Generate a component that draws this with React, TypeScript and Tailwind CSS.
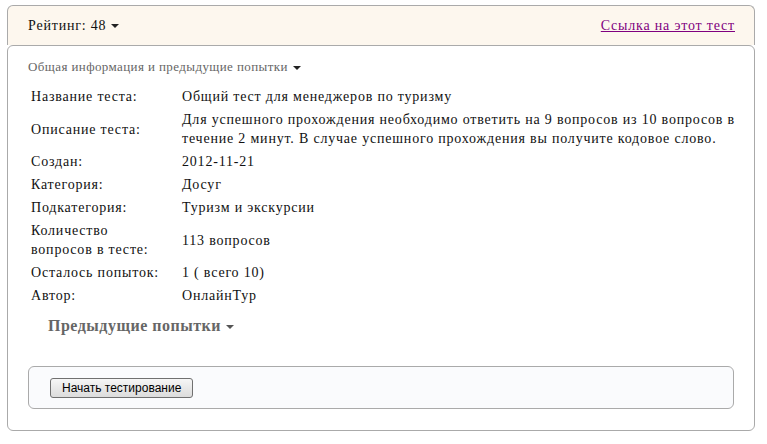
import React from 'react';

const rows: { label: React.ReactNode; value: string }[] = [
  { label: 'Название теста:', value: 'Общий тест для менеджеров по туризму' },
  {
    label: 'Описание теста:',
    value:
      'Для успешного прохождения необходимо ответить на 9 вопросов из 10 вопросов в течение 2 минут. В случае успешного прохождения вы получите кодовое слово.',
  },
  { label: 'Создан:', value: '2012-11-21' },
  { label: 'Категория:', value: 'Досуг' },
  { label: 'Подкатегория:', value: 'Туризм и экскурсии' },
  {
    label: (
      <>
        Количество
        <br />
        вопросов в тесте:
      </>
    ),
    value: '113 вопросов',
  },
  { label: 'Осталось попыток:', value: '1 ( всего 10)' },
  { label: 'Автор:', value: 'ОнлайнТур' },
];

const Caret = ({ color = 'border-t-[#222]' }: { color?: string }) => (
  <span className={`ml-[5px] inline-block h-0 w-0 border-x-[4px] border-t-[4px] border-x-transparent align-middle ${color}`} />
);

const App: React.FC = () => {
  return (
    <div className="min-h-[444px] bg-white pt-[5px] pl-[7px] pr-[12px] font-['Liberation_Serif',serif] text-[14px] tracking-[0.8px] text-[#111]">
      {/* Header */}
      <div className="flex h-[40px] items-center justify-between rounded-t-[6px] border border-b-0 border-[#aaaaaa] bg-[#fdf7ee] pl-[20px] pr-[19px]">
        <span className="leading-[18px]">
          Рейтинг: 48
          <Caret />
        </span>
        <a href="#" className="leading-[18px] text-[#800080] underline">
          Ссылка на этот тест
        </a>
      </div>

      {/* Body */}
      <div className="rounded-[6px] border border-[#aaaaaa] bg-white pb-[21px] pl-[20px] pr-[20px]">
        <div className="mt-[13px] text-[13px] leading-[16px] tracking-[0.4px] text-[#666]">
          Общая информация и предыдущие попытки
          <Caret />
        </div>

        <table className="mt-[9px] w-[726px] border-separate border-spacing-[2px]">
          <tbody>
            {rows.map((r, i) => (
              <tr key={i}>
                <td className="w-[149px] px-px py-px align-middle leading-[19px]">{r.label}</td>
                <td className="px-px py-px align-middle leading-[19px]">{r.value}</td>
              </tr>
            ))}
          </tbody>
        </table>

        <div className="mt-[8px] pl-[20px] text-[16px] font-bold leading-[20px] tracking-[0.5px] text-[#666]">
          Предыдущие попытки
          <Caret color="border-t-[#555]" />
        </div>

        <div className="mt-[30px] rounded-[6px] border border-[#aaaaaa] bg-[#fafbfd] py-[10px] pl-[21px]">
          <button className="h-[20px] rounded-[3px] border border-[#707070] bg-gradient-to-b from-[#f6f6f6] to-[#dcdcdc] px-[11px] font-['Liberation_Sans',sans-serif] text-[12px] leading-[16px] tracking-normal text-black">
            Начать тестирование
          </button>
        </div>
      </div>
    </div>
  );
};

export default App;
